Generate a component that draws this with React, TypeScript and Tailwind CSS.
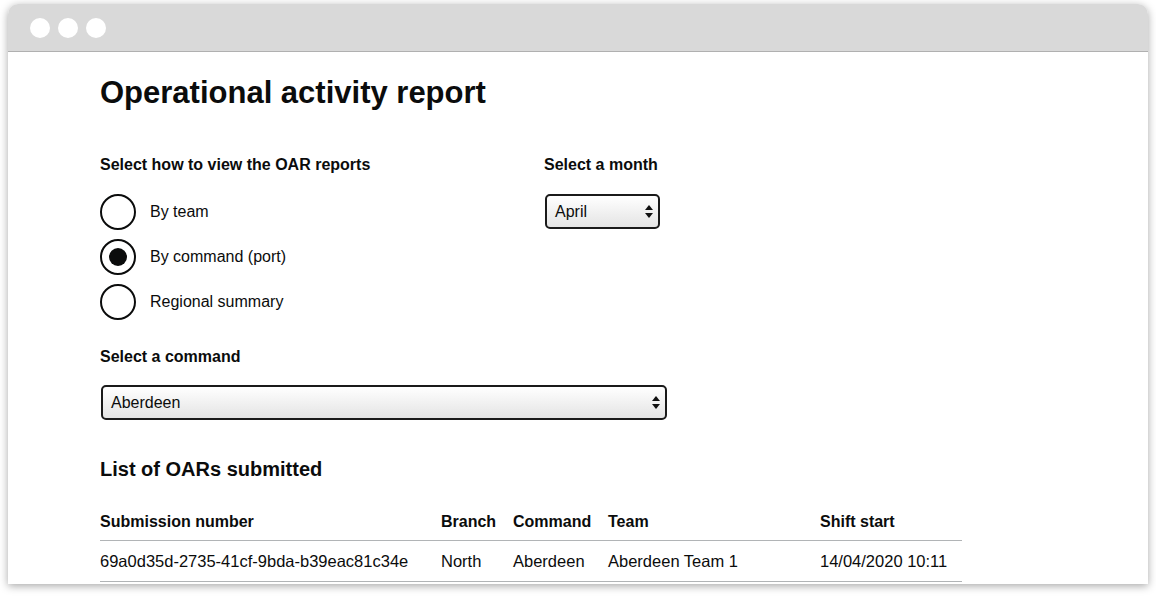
import React from 'react'

const font = { fontFamily: '"Liberation Sans", Arial, sans-serif' }

function Radio({ label, checked }: { label: string; checked?: boolean }) {
  return (
    <div className="flex items-center h-[45px]">
      <span className="w-[36px] h-[36px] rounded-full border-2 border-[#0b0c0c] flex items-center justify-center">
        {checked && <span className="w-[18px] h-[18px] rounded-full bg-[#0b0c0c]" />}
      </span>
      <span className="ml-[14px] text-[16px] text-[#0b0c0c]">{label}</span>
    </div>
  )
}

function Arrows() {
  return (
    <svg width="8" height="13" viewBox="0 0 8 13" className="shrink-0">
      <path d="M4 0 L8 5 L0 5 Z" fill="#111" />
      <path d="M4 13 L8 8 L0 8 Z" fill="#111" />
    </svg>
  )
}

function Select({ value, width }: { value: string; width: string }) {
  return (
    <div
      className={`${width} h-[35px] rounded-[5px] border-2 border-[#1a1a1a] bg-gradient-to-b from-[#ffffff] to-[#e4e4e4] flex items-center justify-between pl-[8px] pr-[5px] text-[16px] text-[#0b0c0c]`}
    >
      <span>{value}</span>
      <Arrows />
    </div>
  )
}

const headers = ['Submission number', 'Branch', 'Command', 'Team', 'Shift start']
const row = ['69a0d35d-2735-41cf-9bda-b39eac81c34e', 'North', 'Aberdeen', 'Aberdeen Team 1', '14/04/2020 10:11']
const colW = ['w-[341px]', 'w-[72px]', 'w-[95px]', 'w-[212px]', 'w-[142px]']

export default function App() {
  return (
    <div className="w-[1156px] h-[598px] bg-white overflow-hidden" style={font}>
      <div className="ml-[8px] mt-[4px] w-[1140px] h-[580px] rounded-t-[10px] bg-white shadow-[0_2px_8px_rgba(0,0,0,0.35)] overflow-hidden flex flex-col">
        <div className="h-[48px] bg-[#d9d9d9] border-b border-[#b0b0b0] flex items-center gap-[8px] pl-[22px] shrink-0">
          <span className="w-[20px] h-[20px] rounded-full bg-white" />
          <span className="w-[20px] h-[20px] rounded-full bg-white" />
          <span className="w-[20px] h-[20px] rounded-full bg-white" />
        </div>
        <div className="pl-[92px] text-[#0b0c0c]">
          <h1 className="text-[31px] font-bold leading-none mt-[25px]">Operational activity report</h1>
          <div className="flex mt-[49px]">
            <div className="w-[444px]">
              <div className="text-[16px] font-bold leading-none">Select how to view the OAR reports</div>
              <div className="mt-[16px]">
                <Radio label="By team" />
                <Radio label="By command (port)" checked />
                <Radio label="Regional summary" />
              </div>
            </div>
            <div>
              <div className="text-[16px] font-bold leading-none">Select a month</div>
              <div className="mt-[21px] ml-[1px]">
                <Select value="April" width="w-[115px]" />
              </div>
            </div>
          </div>
          <div className="text-[16px] font-bold leading-none mt-[25px]">Select a command</div>
          <div className="mt-[20px] ml-[1px]">
            <Select value="Aberdeen" width="w-[566px]" />
          </div>
          <h2 className="text-[20px] font-bold leading-none mt-[39px]">List of OARs submitted</h2>
          <div className="mt-[31px] w-[862px]">
            <div className="flex h-[31px] items-start border-b border-[#b1b4b6] text-[16px] font-bold">
              {headers.map((h, i) => (
                <div key={h} className={colW[i]}>{h}</div>
              ))}
            </div>
            <div className="flex h-[41px] items-center border-b border-[#b1b4b6] text-[16.5px]">
              {row.map((c, i) => (
                <div key={i} className={colW[i]}>{c}</div>
              ))}
            </div>
          </div>
        </div>
      </div>
    </div>
  )
}
